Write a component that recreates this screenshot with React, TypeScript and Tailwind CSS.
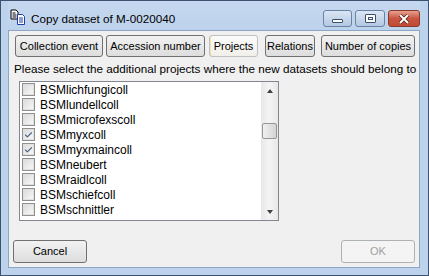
import { Check } from "lucide-react";

const tabs = [
  { label: "Collection event", cls: "ml-[6px] w-[88px]" },
  { label: "Accession number", cls: "ml-[3px] w-[99px]" },
  { label: "Projects", cls: "ml-[4px] w-[49px]", active: true },
  { label: "Relations", cls: "ml-[7px] w-[50px]" },
  { label: "Number of copies", cls: "ml-[6px] w-[94px]" },
];

const projects = [
  { name: "BSMlichfungicoll", checked: false },
  { name: "BSMlundellcoll", checked: false },
  { name: "BSMmicrofexscoll", checked: false },
  { name: "BSMmyxcoll", checked: true },
  { name: "BSMmyxmaincoll", checked: true },
  { name: "BSMneubert", checked: false },
  { name: "BSMraidlcoll", checked: false },
  { name: "BSMschiefcoll", checked: false },
  { name: "BSMschnittler", checked: false },
];

const winBtn =
  "flex h-[22px] items-center justify-center rounded-[3px] border border-[#707070] bg-gradient-to-b from-[#f2f2f2] to-[#dddddd] text-[11px] text-black";

const CopyIcon = () => (
  <svg width="16" height="16" viewBox="0 0 16 16">
    <path d="M1 1h5l2 2v7H1z" fill="#fff" stroke="#000" />
    <path d="M2.5 4h3M2.5 6h4M2.5 8h4" stroke="#000" />
    <path d="M7.5 5.5h5l2 2v8h-7z" fill="#fff" stroke="#1f3fa8" />
    <path d="M9 9h4M9 11h4M9 13h4" stroke="#1f3fa8" />
  </svg>
);

const CaptionButtons = () => (
  <div className="mt-[9px] flex gap-[3px] self-start">
    <div className="flex h-[17px] w-[29px] items-center justify-center rounded-[3px] border border-[#6a83a4] bg-gradient-to-b from-[#dbe6f4] to-[#b3c8e2]">
      <div className="mt-[5px] h-[4px] w-[11px] rounded-[1px] border border-[#3b4f6c] bg-white" />
    </div>
    <div className="flex h-[17px] w-[30px] items-center justify-center rounded-[3px] border border-[#6a83a4] bg-gradient-to-b from-[#dbe6f4] to-[#b3c8e2]">
      <div className="flex h-[9px] w-[11px] items-center justify-center rounded-[1px] border border-[#3b4f6c] bg-white">
        <div className="h-[3px] w-[5px] border border-[#3b4f6c]" />
      </div>
    </div>
    <div className="flex h-[17px] w-[32px] items-center justify-center rounded-[3px] border border-[#8a3a2c] bg-gradient-to-b from-[#e7a08f] via-[#c8553f] to-[#c24a34]">
      <svg width="12" height="10" viewBox="0 0 12 10">
        <path d="M2 1l8 8M10 1L2 9" stroke="#4a1a12" strokeWidth="3.4" />
        <path d="M2 1l8 8M10 1L2 9" stroke="#fff" strokeWidth="2" />
      </svg>
    </div>
  </div>
);

const CheckBox = ({ checked }: { checked: boolean }) => (
  <div className="flex h-[13px] w-[13px] items-center justify-center border border-[#8e8f8f] bg-white">
    <div className="flex h-[11px] w-[11px] items-center justify-center border border-[#e0e0e0] bg-gradient-to-br from-[#dcdcdc] to-[#f7f7f7]">
      {checked && <Check size={10} strokeWidth={3} className="text-[#4d6185]" />}
    </div>
  </div>
);

const Scrollbar = () => (
  <div className="flex w-[17px] flex-col items-center bg-gradient-to-r from-[#e8e8e8] via-[#f4f4f4] to-[#e8e8e8]">
    <div className="flex h-[17px] w-full items-center justify-center">
      <div className="h-0 w-0 border-x-[3.5px] border-b-[4px] border-x-transparent border-b-[#404040]" />
    </div>
    <div className="mt-[24px] h-[16px] w-[15px] rounded-[2px] border border-[#979797] bg-gradient-to-r from-[#f0f0f0] via-[#e2e2e2] to-[#d4d4d4]" />
    <div className="flex-1" />
    <div className="flex h-[17px] w-full items-center justify-center">
      <div className="h-0 w-0 border-x-[3.5px] border-t-[4px] border-x-transparent border-t-[#404040]" />
    </div>
  </div>
);

export default function App() {
  return (
    <div
      className="flex h-[276px] w-[429px] flex-col border border-[#3c5270] bg-[#bdd2eb] px-[7px] pb-[7px] pr-[8px]"
      style={{ fontFamily: '"Liberation Sans", Arial, sans-serif' }}
    >
      <div className="flex h-[29px] shrink-0 items-start bg-gradient-to-b from-[#c5d8ef] to-[#bdd2eb]">
        <div className="ml-[2px] mt-[8px]">
          <CopyIcon />
        </div>
        <div className="ml-[5px] mt-[9px] text-[11.7px] text-black">Copy dataset of M-0020040</div>
        <div className="flex-1" />
        <CaptionButtons />
      </div>

      <div className="flex flex-1 flex-col border border-[#8ea6c6] bg-[#f0f0f0]">
        <div className="mt-[4px] flex">
          {tabs.map((t) =>
            t.active ? (
              <div
                key={t.label}
                className={`flex h-[22px] items-center justify-center rounded-[3px] border border-[#c0c0c0] bg-gradient-to-b from-[#fbfbfb] to-[#f1efe9] text-[11px] text-black shadow-[inset_1px_0_0_#f6dfb0] ${t.cls}`}
              >
                {t.label}
              </div>
            ) : (
              <div key={t.label} className={`${winBtn} ${t.cls}`}>
                {t.label}
              </div>
            )
          )}
        </div>

        <div className="ml-[5px] mt-[5px] h-[13px] whitespace-nowrap text-[11.7px] leading-[13px] text-black">
          Please select the additional projects where the new datasets should belong to
        </div>

        <div className="ml-[10px] mt-[6px] flex h-[140px] w-[260px] border border-[#828790] bg-white">
          <div className="flex flex-1 flex-col">
            {projects.map((p) => (
              <div key={p.name} className="flex h-[15px] items-center">
                <div className="ml-[2px]">
                  <CheckBox checked={p.checked} />
                </div>
                <span className="ml-[5px] text-[12px] text-black">{p.name}</span>
              </div>
            ))}
          </div>
          <Scrollbar />
        </div>

        <div className="flex-1" />

        <div className="mb-[4px] flex px-[4px]">
          <div className={`${winBtn} h-[23px] w-[74px]`}>Cancel</div>
          <div className="flex-1" />
          <div className="flex h-[23px] w-[74px] items-center justify-center rounded-[3px] border border-[#adb2b5] bg-[#f4f4f4] text-[11px] text-[#a0a0a0]">
            OK
          </div>
        </div>
      </div>
    </div>
  );
}
